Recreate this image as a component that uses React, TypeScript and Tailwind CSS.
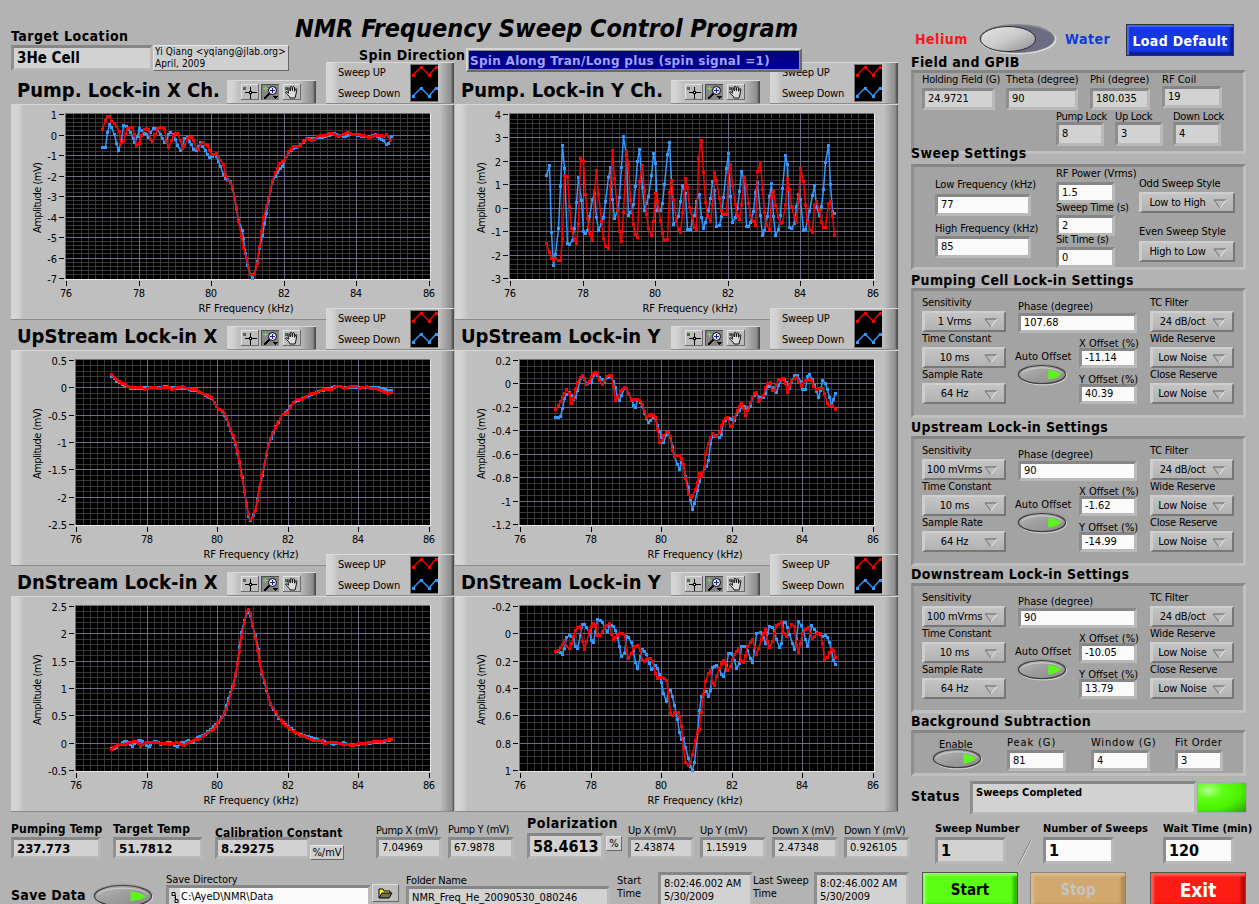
import React from 'react';

type Point = [number, number];

// Traces are stored at three units per pixel, relative to an origin given per chart
const parse = (s: string): Point[] => s.trim().split(/\s+/).map((p) => p.split(',').map(Number) as Point);

// Frequency step of one sample
const STEP = 7.25;

const resample = (points: Point[]): Point[] => {
  const out: Point[] = [points[0]];
  for (let i = 1; i < points.length; i++) {
    const [x0, y0] = points[i - 1];
    const [x1, y1] = points[i];
    const n = Math.max(1, Math.round((x1 - x0) / STEP));
    for (let k = 1; k <= n; k++) {
      out.push([x0 + ((x1 - x0) * k) / n, y0 + ((y1 - y0) * k) / n]);
    }
  }
  return out;
};

const PUMP_X_UP =
  '308,388 316,362 322,350 328,350 335,364 343,370 350,378 357,395 362,433 370,425 376,403 383,386 390,383 397,382 403,402 410,436 418,430 425,406 432,388 438,385 445,388 452,418 458,424 466,402 473,386 480,382 487,382 493,386 500,424 506,442 513,422 520,406 527,400 533,401 540,420 547,446 554,436 562,414 568,412 575,412 581,422 588,446 595,449 602,434 608,427 615,432 622,437 629,452 635,464 642,463 650,461 656,470 662,480 670,494 676,526 684,540 690,546 697,562 703,592 709,622 716,664 724,708 731,742 738,776 744,802 751,823 757,824 764,820 772,790 778,740 784,694 791,652 799,620 805,596 811,572 818,541 826,518 833,504 839,490 847,485 853,482 860,468 866,454 873,449 881,440 888,440 895,438 902,436 909,424 918,414 927,418 935,420 943,418 951,409 960,406 975,406 988,400 1003,402 1015,410 1030,404 1043,397 1057,404 1073,402 1085,405 1098,410 1111,413 1125,406 1140,407 1151,408 1160,402 1165,410 1172,420';
const PUMP_X_DOWN =
  '308,442 316,442 322,396 328,372 335,382 343,403 350,430 356,452 363,420 370,376 378,380 385,388 392,398 399,414 404,426 411,410 418,385 425,390 432,400 438,404 446,412 452,398 459,386 466,386 473,388 480,404 487,415 494,426 500,420 506,404 512,396 520,402 527,418 533,436 540,450 547,442 554,414 562,412 568,424 575,434 581,447 588,452 595,440 602,428 608,440 615,452 622,464 629,472 636,468 643,462 650,470 656,484 662,500 670,524 676,536 690,543 697,566 703,592 709,625 716,660 726,692 731,715 736,760 742,795 750,822 757,835 764,820 772,785 779,745 786,705 793,670 800,640 806,600 812,572 818,543 826,528 833,518 840,505 848,498 853,480 866,456 881,445 895,438 909,426 920,416 943,414 975,410 1003,400 1030,410 1057,402 1085,408 1111,411 1125,404 1138,415 1151,422 1160,433 1166,430 1173,410';
const PUMP_Y_UP =
  '290,730 298,758 304,776 310,782 316,776 325,782 332,780 337,716 344,527 352,530 359,620 364,686 373,718 380,730 386,670 392,475 400,485 407,584 412,655 418,700 427,721 433,575 439,511 446,583 454,664 460,716 467,740 475,745 481,560 488,451 494,536 502,632 508,694 514,724 521,636 530,454 536,494 542,602 550,673 556,703 562,712 569,545 577,496 583,572 590,643 596,685 604,707 610,664 617,580 623,605 631,660 638,700 644,721 652,718 659,578 665,542 671,598 680,660 685,688 692,697 698,636 707,535 712,562 719,622 727,655 733,683 739,688 746,475 754,421 760,517 767,607 773,646 781,664 788,614 794,517 800,541 808,596 814,632 820,643 829,643 835,517 842,494 848,557 856,614 862,646 868,658 874,614 883,532 889,560 895,610 902,646 910,664 916,676 922,514 932,488 938,568 943,637 950,676 958,688 964,593 970,574 976,616 985,652 992,670 998,668 1006,614 1012,536 1019,568 1025,620 1034,652 1040,668 1046,604 1052,506 1060,545 1067,616 1073,664 1080,691 1087,697 1094,616 1100,604 1108,632 1115,668 1121,683 1127,682 1135,610 1142,604 1148,646 1154,706';
const PUMP_Y_DOWN =
  '290,526 298,496 304,698 310,797 316,764 325,685 331,560 337,436 343,506 352,730 358,734 366,720 373,684 379,607 386,533 393,600 400,694 406,700 412,690 419,650 428,598 433,580 439,652 446,690 454,670 461,652 466,604 475,532 481,503 488,598 493,655 502,632 508,593 514,502 521,410 528,465 536,646 542,638 550,614 556,560 562,484 568,448 577,562 584,632 596,590 604,526 610,461 617,490 623,632 631,632 638,610 643,553 652,464 658,427 664,545 671,673 680,660 686,650 692,604 698,557 707,580 712,688 720,688 726,660 733,646 740,604 747,584 754,652 761,684 767,666 775,630 781,596 787,545 793,572 800,679 808,676 815,650 820,593 830,506 835,461 841,590 848,666 856,652 863,626 868,574 874,514 882,545 890,679 895,679 902,666 910,634 916,578 922,548 932,646 938,706 944,690 952,650 958,590 964,550 970,650 977,706 985,688 992,646 998,565 1006,466 1012,494 1019,682 1025,685 1034,670 1040,620 1046,584 1052,598 1061,690 1067,688 1078,634 1088,587 1094,557 1100,622 1108,646 1115,620 1120,568 1127,488 1135,436 1142,553 1148,634 1154,640';
const UP_X_UP =
  '334,194 343,203 350,209 357,215 364,219 376,224 383,230 397,232 425,233 433,238 442,234 460,232 480,235 493,231 508,231 515,238 530,233 547,229 562,235 575,237 588,239 600,247 615,254 635,262 643,277 650,288 658,297 666,300 673,309 680,323 686,340 692,358 701,376 707,398 713,425 719,455 725,496 734,541 740,583 746,614 752,628 758,623 767,602 773,571 779,536 785,496 794,464 800,430 806,407 812,386 818,370 827,353 833,339 840,325 848,313 862,306 870,292 880,278 890,268 908,267 920,258 935,250 953,248 970,237 995,237 1010,230 1022,230 1034,236 1052,229 1068,229 1078,235 1098,229 1112,235 1130,236 1150,245 1162,250 1175,247';
const UP_X_DOWN =
  '334,200 350,213 366,222 390,235 425,234 442,232 480,232 500,230 530,235 560,236 575,241 590,242 615,256 635,264 650,290 666,304 680,326 692,362 707,402 719,458 734,545 746,618 752,630 767,600 779,533 794,462 806,404 827,350 848,314 862,302 880,276 908,266 935,253 970,240 1010,229 1034,233 1060,231 1098,232 1130,232 1150,236 1162,242 1175,241';
const UP_Y_UP =
  '316,298 325,287 332,274 338,262 344,250 350,239 358,250 365,280 371,265 377,239 383,217 391,203 398,196 404,205 410,222 417,214 424,200 430,190 437,187 443,190 449,212 458,223 464,210 470,200 477,196 483,197 491,230 497,271 503,262 510,245 517,238 524,233 530,234 536,250 543,268 563,268 569,272 576,282 583,304 590,323 597,315 603,313 609,316 617,322 623,358 629,397 636,392 641,377 650,368 656,368 662,378 668,421 674,439 687,436 693,446 700,464 707,505 716,553 723,562 728,556 735,538 743,517 749,490 755,498 762,472 767,433 776,400 782,382 788,370 799,380 808,368 814,346 821,334 827,325 833,322 841,350 848,350 854,322 862,300 868,290 875,281 881,294 887,317 893,300 901,278 908,262 914,250 920,247 926,274 932,268 940,256 946,233 953,219 960,218 967,240 973,240 979,222 986,209 1000,206 1006,220 1013,247 1019,230 1025,212 1034,204 1040,202 1046,214 1053,228 1058,220 1067,212 1077,208 1085,212 1091,228 1100,238 1109,236 1117,236 1124,250 1132,280 1139,289 1148,285 1156,298';
const UP_Y_DOWN =
  '316,322 325,322 332,320 338,295 344,266 350,252 358,248 365,256 371,268 377,262 383,240 391,205 398,200 404,208 411,220 417,218 424,216 430,196 437,190 443,197 449,202 456,208 464,215 472,202 482,200 490,215 497,232 503,262 508,272 515,256 524,234 530,236 536,250 543,268 551,286 557,292 563,270 570,278 576,290 583,310 590,325 596,338 602,330 609,323 617,325 623,345 629,365 635,382 641,397 650,372 656,370 662,382 668,408 674,440 681,463 688,478 695,458 700,464 707,498 716,533 721,570 727,598 734,580 742,541 749,514 755,495 762,475 768,468 775,451 781,400 788,380 800,376 808,382 815,373 821,335 833,325 845,327 852,332 860,312 867,300 875,293 882,290 890,294 901,290 908,263 920,250 928,262 940,262 946,250 953,230 960,228 972,235 979,248 986,225 995,208 1003,208 1010,218 1018,235 1025,215 1034,197 1042,197 1050,215 1058,238 1066,238 1073,198 1079,193 1086,208 1093,225 1105,262 1112,240 1118,211 1125,220 1132,237 1139,262 1144,282 1150,268 1157,250';
const DN_X_UP =
  '334,1318 345,1309 358,1302 376,1304 390,1297 408,1294 421,1308 440,1296 458,1298 480,1299 508,1302 530,1298 553,1305 566,1297 580,1290 600,1286 620,1270 640,1258 653,1238 668,1218 680,1198 686,1180 692,1153 701,1127 707,1093 713,1059 719,1024 725,982 734,938 740,903 746,899 752,911 758,943 767,985 773,1022 779,1054 785,1085 794,1112 800,1136 806,1162 812,1180 818,1192 827,1203 836,1220 850,1240 865,1252 880,1264 900,1275 920,1282 940,1290 960,1291 975,1300 1000,1296 1030,1302 1060,1306 1075,1300 1100,1300 1120,1295 1145,1294 1160,1290 1175,1289';
const DN_X_DOWN =
  '334,1316 350,1312 366,1296 378,1294 397,1308 408,1294 420,1290 432,1300 447,1310 458,1296 470,1294 482,1302 510,1296 531,1310 545,1298 566,1292 580,1297 592,1282 615,1272 640,1250 655,1236 672,1210 685,1165 698,1130 712,1060 718,1010 725,968 734,932 742,906 750,915 766,975 774,1018 785,1090 800,1142 812,1184 836,1226 865,1248 890,1270 920,1278 960,1290 1000,1302 1030,1298 1050,1306 1090,1300 1130,1298 1175,1289';
const DN_Y_UP =
  '316,304 325,302 332,293 338,284 344,270 350,290 358,295 364,280 370,260 377,241 383,232 391,228 397,275 404,298 410,275 417,245 424,228 431,219 437,225 443,256 449,256 457,243 464,232 470,226 477,220 483,254 491,269 497,262 503,255 509,250 524,253 530,300 536,324 543,310 551,296 557,288 563,286 570,300 576,330 583,334 590,327 602,325 608,335 615,370 623,385 635,382 649,391 656,427 662,490 668,496 674,488 684,488 688,500 694,530 700,595 707,637 716,646 722,638 728,613 735,572 742,548 749,538 755,487 761,434 767,394 776,370 782,362 788,400 794,407 800,380 808,355 815,340 821,332 827,340 833,360 841,350 848,328 854,313 865,295 873,335 880,338 886,315 893,290 900,278 908,269 914,290 920,313 926,295 933,268 940,250 947,237 953,275 959,292 967,275 973,250 980,227 993,218 1000,250 1008,260 1016,240 1025,223 1033,228 1040,285 1046,307 1052,280 1058,250 1067,238 1074,232 1080,250 1087,266 1094,260 1103,249 1112,250 1117,280 1124,328 1132,322 1139,308 1145,298 1151,302 1157,323';
const DN_Y_DOWN =
  '316,304 331,307 338,314 344,296 350,262 358,256 365,258 371,265 377,289 383,296 391,255 397,224 404,224 410,232 417,248 424,270 431,278 437,245 443,208 450,210 458,217 464,232 472,243 478,228 484,226 490,230 497,240 503,262 508,288 515,320 522,310 530,258 536,262 543,277 550,300 557,338 563,356 570,320 576,298 583,304 590,314 597,340 603,358 609,355 616,346 623,355 629,373 635,398 641,430 650,453 656,428 662,420 668,440 674,465 682,508 688,548 694,568 701,564 707,592 716,625 722,650 728,662 734,636 742,550 749,480 755,440 762,425 769,425 776,440 782,420 788,352 800,346 808,358 815,374 821,380 829,345 835,311 847,312 854,330 860,356 867,340 873,290 885,288 893,300 900,325 908,338 914,300 920,250 930,246 940,262 947,281 953,250 959,229 968,232 974,242 980,268 987,293 993,280 999,218 1006,217 1012,232 1019,254 1026,280 1033,298 1040,265 1046,214 1053,225 1060,245 1066,268 1073,290 1080,250 1085,226 1092,238 1100,248 1110,252 1117,258 1125,255 1132,262 1139,278 1145,300 1151,330 1157,344';

interface ChartData {
  title: string;
  left: number;
  yTicks: string[];
  minor: number;
  origin: Point;
  up: string;
  down: string;
}

const charts: ChartData[] = [
  { title: 'Pump. Lock-in X Ch.', left: 55, yTicks: ['1', '0', '-1', '-2', '-3', '-4', '-5', '-6', '-7'], minor: 5, origin: [33, 312], up: PUMP_X_UP, down: PUMP_X_DOWN },
  { title: 'Pump. Lock-in Y Ch.', left: 55, yTicks: ['4', '3', '2', '1', '0', '-1', '-2', '-3'], minor: 5, origin: [15, 312], up: PUMP_Y_UP, down: PUMP_Y_DOWN },
  { title: 'UpStream Lock-in X', left: 65, yTicks: ['0.5', '0', '-0.5', '-1', '-1.5', '-2', '-2.5'], minor: 5, origin: [33, 120], up: UP_X_UP, down: UP_X_DOWN },
  { title: 'UpStream Lock-in Y', left: 65, yTicks: ['0.2', '0', '-0.2', '-0.4', '-0.6', '-0.8', '-1', '-1.2'], minor: 4, origin: [15, 120], up: UP_Y_UP, down: UP_Y_DOWN },
  { title: 'DnStream Lock-in X', left: 65, yTicks: ['2.5', '2', '1.5', '1', '0.5', '0', '-0.5'], minor: 5, origin: [33, 858], up: DN_X_UP, down: DN_X_DOWN },
  { title: 'DnStream Lock-in Y', left: 65, yTicks: ['-0.2', '0', '0.2', '0.4', '0.6', '0.8', '1'], minor: 4, origin: [15, 138], up: DN_Y_UP, down: DN_Y_DOWN },
];

const X_TICKS = ['76', '78', '80', '82', '84', '86'];
const PLOT_RIGHT = 418;
const PLOT_TOP = 10;
const PLOT_BOTTOM = 174;

const Trace: React.FC<{ data: string; origin: Point; color: string }> = ({ data, origin, color }) => {
  const pts = resample(parse(data)).map(([x, y]) => [Math.round((x - origin[0]) / 3 - 0.5), Math.round((y - origin[1]) / 3 - 0.5)]);
  return (
    <g>
      <polyline points={pts.map(([x, y]) => `${x + 0.5},${y + 0.5}`).join(' ')} fill="none" stroke={color} strokeWidth={1.5} />
      {pts.map(([x, y], i) => (
        <rect key={i} x={x - 1} y={y - 1} width={3} height={3} fill={color} shapeRendering="crispEdges" />
      ))}
    </g>
  );
};

const Graph: React.FC<{ chart: ChartData }> = ({ chart }) => {
  const { left, yTicks, minor, origin } = chart;
  const w = PLOT_RIGHT - left;
  const h = PLOT_BOTTOM - PLOT_TOP;
  const xPos = (i: number, n: number) => Math.round(left + (w * i) / n);
  const yPos = (i: number, n: number) => Math.round(PLOT_TOP + (h * i) / n);
  const rows = yTicks.length - 1;
  const center = (left + PLOT_RIGHT) / 2;

  return (
    <svg width={443} height={214} className="-mt-px block" fontSize={11}>
      <g shapeRendering="crispEdges">
        <rect x={left - 1} y={9} width={w + 3} height={167} fill="#e6e6e6" />
        <rect x={left - 1} y={9} width={w + 2} height={166} fill="#6e6e6e" />
        <rect x={left} y={PLOT_TOP} width={w + 1} height={h + 1} fill="#000" />
        {Array.from({ length: 49 }, (_, i) => (
          <rect key={i} x={xPos(i + 1, 50)} y={PLOT_TOP} width={1} height={h + 1} fill="#383838" />
        ))}
        {Array.from({ length: rows * minor - 1 }, (_, i) => (
          <rect key={i} x={left} y={yPos(i + 1, rows * minor)} width={w + 1} height={1} fill="#383838" />
        ))}
        {X_TICKS.slice(1, -1).map((t, i) => (
          <rect key={t} x={xPos(i + 1, 5)} y={PLOT_TOP} width={1} height={h + 1} fill="#6c6c88" />
        ))}
        {yTicks.slice(1, -1).map((t, i) => (
          <rect key={t} x={left} y={yPos(i + 1, rows)} width={w + 1} height={1} fill="#6c6c88" />
        ))}
        {X_TICKS.map((t, i) => (
          <rect key={t} x={xPos(i, 5)} y={177} width={1} height={5} fill="#000" />
        ))}
        {yTicks.map((t, i) => (
          <rect key={t} x={left - 7} y={yPos(i, rows)} width={5} height={1} fill="#000" />
        ))}
      </g>
      {X_TICKS.map((t, i) => (
        <text key={t} x={xPos(i, 5)} y={193} textAnchor="middle" textLength={12}>
          {t}
        </text>
      ))}
      {yTicks.map((t, i) => (
        <text key={t} x={left - 9} y={yPos(i, rows) + 5} textAnchor="end" letterSpacing={-0.1}>
          {t}
        </text>
      ))}
      <text x={center - 49} y={208} textLength={95}>
        RF Frequency (kHz)
      </text>
      <text transform="translate(30 129) rotate(-90)" textLength={71}>
        Amplitude (mV)
      </text>
      <Trace data={chart.down} origin={origin} color="#3399ff" />
      <Trace data={chart.up} origin={origin} color="#ff0000" />
    </svg>
  );
};

const Palette: React.FC = () => (
  <div className="mt-[18px] flex h-6 w-[89px] border-t border-b border-t-[#dadada] border-b-[#8a8a8a] bg-[linear-gradient(90deg,#d6d6d6_0,#d2d2d2_6px,#bfbfbf_12px,#bfbfbf_72px,#8c8c8c_86px,#4c4c4c_88px)] pt-[3px] pl-[14px]">
    <svg width={62} height={17} shapeRendering="crispEdges">
      <rect x={0} y={0} width={18} height={16} fill="#6a6a6a" />
      <rect x={0} y={0} width={17} height={15} fill="#e2e2e2" />
      <rect x={1} y={1} width={16} height={14} fill="#bdbdbd" />
      <rect x={2} y={3} width={3} height={3} fill="#46703c" />
      <path d="M9.5 3v12M4 8.5h12" stroke="#000" />
      <rect x={8} y={7} width={3} height={3} fill="#000" />
      <rect x={9} y={8} width={1} height={1} fill="#fff" />

      <rect x={20} y={0} width={18} height={16} fill="#4f4f4f" />
      <rect x={21} y={1} width={17} height={15} fill="#858585" />
      <path d="M22 4.5h5M24.500 2v5" stroke="#5cf02c" strokeWidth={1} />
      <path d="M28 10l-5 5" stroke="#000" strokeWidth={2} />
      <circle cx={31.5} cy={6.5} r={4} fill="#e4e4fa" stroke="#000" shapeRendering="auto" />
      <path d="M29 6.500h5M31.500 4v5" stroke="#1c1c8c" />
      <path d="M31 12h6l-3 3z" fill="#000" />

      <rect x={42} y={0} width={18} height={16} fill="#6a6a6a" />
      <rect x={42} y={0} width={17} height={15} fill="#e2e2e2" />
      <rect x={43} y={1} width={16} height={14} fill="#bdbdbd" />
      <rect x={44} y={3} width={3} height={3} fill="#46703c" />
      <path
        d="M49 14c0-2-4-4-4.500-6 .8-.9 2 .4 3 1.300L47 4.500c.2-1 1.500-.8 1.700 0l.6 2.500-.1-4c.3-1 1.500-.9 1.800 0l.4 3.700.4-3.500c.4-.8 1.400-.7 1.700.2l.1 3.900.8-2.300c.5-.7 1.400-.5 1.500.3L55 10l-1 4z"
        fill="#dcdcdc"
        stroke="#000"
        strokeWidth={0.9}
        shapeRendering="auto"
      />
    </svg>
  </div>
);

const Legend: React.FC = () => (
  <div className="ml-[10px] flex h-[42px] w-[117px] grow border-t border-b border-t-[#dadada] border-b-[#8a8a8a] bg-[linear-gradient(90deg,#d6d6d6_0,#d2d2d2_6px,#bfbfbf_12px,#bfbfbf_113px,#8c8c8c_125px,#4c4c4c_127px)] pl-3">
    <div className="w-[72px] pt-[3px] text-[11px] leading-[14px] tracking-[-0.2px] whitespace-nowrap">
      <div className="mb-[7px]">Sweep UP</div>
      <div>Sweep Down</div>
    </div>
    <svg width={28} height={38} className="mt-px" shapeRendering="crispEdges">
      <rect width={28} height={37} fill="#000" stroke="#777" />
      <g fill="none" shapeRendering="auto" strokeWidth={1.3}>
        <path d="M3 11l8-8 8 8 7-8" stroke="#f00" />
        <path d="M3 32l8-8 8 8 7-8" stroke="#39f" />
      </g>
      {[[3, 11], [11, 3], [19, 11], [26, 3]].map(([x, y]) => (
        <g key={x}>
          <rect x={x - 1} y={y - 1} width={3} height={3} fill="#f00" />
          <rect x={x - 1} y={y + 20} width={3} height={3} fill="#39f" />
        </g>
      ))}
    </svg>
  </div>
);

const ChartPanel: React.FC<{ chart: ChartData }> = ({ chart }) => (
  <div className="h-[246px] w-[443px]">
    <div className="relative flex h-[42px] items-start">
      <h2 className="mt-4 w-[216px] pl-[6px] text-[20px] leading-6 font-bold whitespace-nowrap">{chart.title}</h2>
      <Palette />
      <Legend />
    </div>
    <div className="h-[216px] border-t border-b border-t-[#d8d8d8] border-b-[#8a8a8a] bg-[linear-gradient(90deg,#d6d6d6_0,#d2d2d2_7px,#bfbfbf_13px,#bfbfbf_429px,#8c8c8c_441px,#4c4c4c_443px)]">
      <Graph chart={chart} />
    </div>
  </div>
);

const Label: React.FC<{ className?: string; children: React.ReactNode }> = ({ className = 'h-4 tracking-[-0.2px]', children }) => (
  <div className={`text-[11px] leading-4 whitespace-nowrap ${className}`}>{children}</div>
);

const Box: React.FC<{ className: string; input?: boolean; children?: React.ReactNode }> = ({ className, input, children }) => (
  <div
    className={`flex shrink-0 overflow-hidden border-[3px] border-t-[#868686] border-r-[#b9b9b9] border-b-[#b9b9b9] border-l-[#8e8e8e] pt-px pl-[3px] whitespace-nowrap ${input ? 'bg-[#fafafa]' : 'bg-[#d2d2d2]'} ${className}`}
  >
    {children}
  </div>
);

const Field: React.FC<{ label: string; value: string; box: string; className?: string; labelClass?: string; input?: boolean }> = ({
  label,
  value,
  box,
  className = '',
  labelClass,
  input,
}) => (
  <div className={className}>
    <Label className={labelClass}>{label}</Label>
    <Box className={`items-center text-[11px] ${box}`} input={input}>
      {value}
    </Box>
  </div>
);

const Dropdown: React.FC<{ label: string; value: string; width?: string; labelClass?: string; className?: string }> = ({
  label,
  value,
  width = 'w-[84px]',
  labelClass,
  className = '',
}) => (
  <div className={className}>
    <Label className={labelClass}>{label}</Label>
    <div
      className={`flex h-[21px] items-center border-t-2 border-r-2 border-b-2 border-l-[3px] border-t-[#cfcfcf] border-r-[#777] border-b-[#777] border-l-[#cdcdcd] bg-[linear-gradient(#c4c4c4,#b2b2b2)] ${width}`}
    >
      <span className="grow text-center text-[11px] leading-[14px] tracking-[-0.2px] whitespace-nowrap">{value}</span>
      <svg width={14} height={10} className="mt-[2px] mr-[6px] shrink-0">
        <path d="M1 1h12" stroke="#606060" fill="none" />
        <path d="M1 1l6 8" stroke="#707070" fill="none" />
        <path d="M7 9l6-8" stroke="#e8e8e8" fill="none" />
      </svg>
    </div>
  </div>
);

const LedButton: React.FC<{ id: string; width: number; height: number; className?: string }> = ({ id, width, height, className = '' }) => (
  <svg width={width + 6} height={height + 6} viewBox={`-3 -3 ${width + 6} ${height + 6}`} className={`shrink-0 ${className}`}>
    <defs>
      <linearGradient id={id} x1="0" y1="0" x2="1" y2="1">
        <stop offset="0" stopColor="#b8b8b8" />
        <stop offset="0.5" stopColor="#9c9c9c" />
        <stop offset="1" stopColor="#8c8c8c" />
      </linearGradient>
    </defs>
    <ellipse cx={width / 2} cy={height / 2} rx={width / 2 + 1.5} ry={height / 2 + 1.5} fill="#8e8e8e" opacity={0.5} />
    <ellipse cx={width / 2 + 0.8} cy={height / 2 + 1} rx={width / 2} ry={height / 2} fill="none" stroke="#d8d8d8" />
    <ellipse cx={width / 2} cy={height / 2} rx={width / 2 - 0.5} ry={height / 2 - 0.5} fill={`url(#${id})`} stroke="#3c3c3c" strokeWidth={1.2} />
    <path d={`M4 ${height / 2 - 1}C9 1 ${width - 9} 1 ${width - 4} ${height / 2 - 1}`} stroke="#d0d0d0" fill="none" />
    <path d={`M${width * 0.63} ${height / 2 - 5}c5 1 9 2 ${width * 0.27} 5c-3 3-8 4.500-${width * 0.27} 5z`} fill="#5cf51c" />
  </svg>
);

const Section: React.FC<{ title: string; titleClass: string; className: string; children: React.ReactNode }> = ({
  title,
  titleClass,
  className,
  children,
}) => (
  <>
    <h3 className={`relative text-[14px] leading-4 font-bold tracking-[0.35px] whitespace-nowrap ${titleClass}`}>{title}</h3>
    <section
      className={`w-[335px] border-[3px] border-t-[#868686] border-r-[#bfbfbf] border-b-[#bfbfbf] border-l-[#8e8e8e] bg-[#a3a3a3] ${className}`}
    >
      {children}
    </section>
  </>
);

interface LockIn {
  id: string;
  title: string;
  titleClass: string;
  sensitivity: string;
  phase: string;
  xOffset: string;
  yOffset: string;
}

const lockIns: LockIn[] = [
  { id: 'pump', title: 'Pumping Cell Lock-in Settings', titleClass: 'mt-[2px] h-4', sensitivity: '1 Vrms', phase: '107.68', xOffset: '-11.14', yOffset: '40.39' },
  { id: 'up', title: 'Upstream Lock-in Settings', titleClass: 'mt-px h-[17px]', sensitivity: '100 mVrms', phase: '90', xOffset: '-1.62', yOffset: '-14.99' },
  { id: 'down', title: 'Downstream Lock-in Settings', titleClass: 'h-[17px]', sensitivity: '100 mVrms', phase: '90', xOffset: '-10.05', yOffset: '13.79' },
];

const LockInSection: React.FC<{ lockIn: LockIn }> = ({ lockIn }) => (
  <Section title={lockIn.title} titleClass={lockIn.titleClass} className="flex h-[130px] pt-1 pl-2">
    <div className="w-[93px]">
      <Dropdown label="Sensitivity" value={lockIn.sensitivity} />
      <Dropdown label="Time Constant" value="10 ms" className="-mt-px" />
      <Dropdown label="Sample Rate" value="64 Hz" className="-mt-px" />
    </div>
    <div className="w-[135px] pt-1">
      <Field label="Phase (degree)" value={lockIn.phase} box="h-5 w-[119px]" className="pl-[3px]" labelClass="h-[14px]" input />
      <div className="flex pt-[3px]">
        <div className="w-16 pt-[13px]">
          <Label className="h-[13px] tracking-[0.05px]">Auto Offset</Label>
          <LedButton id={`auto-${lockIn.id}`} width={48} height={19} />
        </div>
        <div>
          <Field label="X Offset (%)" value={lockIn.xOffset} box="h-5 w-[58px]" labelClass="h-3" input />
          <Field label="Y Offset (%)" value={lockIn.yOffset} box="h-5 w-[58px]" className="mt-1" labelClass="h-3" input />
        </div>
      </div>
    </div>
    <div>
      <Dropdown label="TC Filter" value="24 dB/oct" />
      <Dropdown label="Wide Reserve" value="Low Noise" className="-mt-px" />
      <Dropdown label="Close Reserve" value="Low Noise" className="-mt-px" />
    </div>
  </Section>
);

const Header: React.FC = () => (
  <header className="relative z-10 flex h-[62px] items-start">
    <div className="w-[284px] shrink-0 pt-[28px]">
      <div className="h-[17px] text-[14px] leading-4 font-bold tracking-[0.5px]">Target Location</div>
      <div className="flex">
        <Box className="h-[26px] w-[142px] items-center text-[15px] font-bold">3He Cell</Box>
        <div className="h-[26px] w-[136px] border border-t-[#e4e4e4] border-r-[#666] border-b-[#666] border-l-[#e4e4e4] bg-[#cfcfcf] pl-px text-[10px] leading-3 tracking-[0.1px] whitespace-nowrap">
          Yi Qiang &lt;yqiang@jlab.org&gt;
          <br />
          April, 2009
        </div>
      </div>
    </div>
    <div>
      <h1 className="mt-[14px] h-[32px] text-[25px] leading-[30px] font-bold tracking-[-0.05px] whitespace-nowrap italic">
        NMR Frequency Sweep Control Program
      </h1>
      <div className="flex items-start pt-[2px] pl-16">
        <div className="w-[107px] pt-px -mt-[2px] text-[14px] leading-4 font-bold tracking-[0.4px] whitespace-nowrap">Spin Direction</div>
        <div className="flex h-6 w-[336px] items-center border-2 border-t-[#d4d4d4] border-r-[#6a6a6a] border-b-[#6a6a6a] border-l-[#d4d4d4] bg-[#00008b] pt-px pl-[2px] font-['DejaVu_Sans',sans-serif] text-[12px] font-bold tracking-[0.3px] whitespace-nowrap text-[#a3a3ff] outline-1 -outline-offset-3 outline-[#8a8a8a]">
          Spin Along Tran/Long plus (spin signal =1)
        </div>
      </div>
    </div>
  </header>
);

const Unit: React.FC<{ className: string; children: React.ReactNode }> = ({ className, children }) => (
  <div
    className={`flex items-center justify-center border border-t-[#e4e4e4] border-r-[#666] border-b-[#666] border-l-[#e4e4e4] bg-[#cfcfcf] pt-px text-[11px] ${className}`}
  >
    {children}
  </div>
);

const Readouts: React.FC = () => (
  <div className="flex h-[60px] items-start">
    <div className="mt-[10px] w-[102px]">
      <div className="h-[15px] text-[12px] leading-[14px] font-bold tracking-[0.15px] whitespace-nowrap">Pumping Temp</div>
      <Box className="h-[22px] w-[90px] items-center text-[13px] font-bold">237.773</Box>
    </div>
    <div className="mt-[10px] w-[102px]">
      <div className="h-[15px] text-[12px] leading-[14px] font-bold tracking-[0.25px] whitespace-nowrap">Target Temp</div>
      <Box className="h-[22px] w-[90px] items-center text-[13px] font-bold">51.7812</Box>
    </div>
    <div className="mt-[13px] w-[161px]">
      <div className="relative h-3 text-[12px] leading-4 font-bold tracking-[0.1px] whitespace-nowrap">Calibration Constant</div>
      <div className="flex items-start">
        <Box className="h-[22px] w-[95px] items-center text-[13px] font-bold">8.29275</Box>
        <Unit className="mt-2 h-[15px] w-[34px]">%/mV</Unit>
      </div>
    </div>
    <Field label="Pump X (mV)" value="7.04969" className="mt-[11px] w-[72px]" labelClass="h-[14px] tracking-[-0.3px]" box="h-[22px] w-[66px]" />
    <Field label="Pump Y (mV)" value="67.9878" className="mt-[10px] w-[79px]" labelClass="h-[15px] tracking-[-0.3px]" box="h-[22px] w-[66px]" />
    <div className="mt-[3px] w-[101px]">
      <div className="h-[18px] text-[14px] leading-4 font-bold tracking-[0.5px]">Polarization</div>
      <div className="flex items-start gap-[2px]">
        <Box className="h-[26px] w-[77px] items-center text-[16px] font-bold">58.4613</Box>
        <Unit className="mt-[3px] h-[15px] w-4">%</Unit>
      </div>
    </div>
    <Field label="Up X (mV)" value="2.43874" className="mt-[11px] w-[72px]" labelClass="h-[14px] tracking-[-0.3px]" box="h-[22px] w-[66px]" />
    <Field label="Up Y (mV)" value="1.15919" className="mt-[11px] w-[72px]" labelClass="h-[14px] tracking-[-0.3px]" box="h-[22px] w-[66px]" />
    <Field label="Down X (mV)" value="2.47348" className="mt-[11px] w-[72px]" labelClass="h-[14px] tracking-[-0.3px]" box="h-[22px] w-[66px]" />
    <Field label="Down Y (mV)" value="0.926105" className="mt-[11px]" labelClass="h-[14px] tracking-[-0.3px]" box="h-[22px] w-[66px]" />
  </div>
);

const TimeStamp: React.FC = () => (
  <Box className="h-[36px] w-[95px] items-start">
    <div className="pt-px text-[11px] leading-[13px] tracking-[-0.1px]">
      8:02:46.002 AM
      <br />
      5/30/2009
    </div>
  </Box>
);

const SaveBar: React.FC = () => (
  <div className="flex h-8 items-start overflow-hidden">
    <div className="mt-[15px] w-[80px] text-[14px] leading-4 font-bold tracking-[0.3px] whitespace-nowrap">Save Data</div>
    <LedButton id="save" width={58} height={22} className="mt-[10px]" />
    <div className="w-[206px] pl-[11px]">
      <Label className="h-[13px] tracking-[-0.1px]">Save Directory</Label>
      <Box className="h-[24px] w-[205px] items-center text-[11px]" input>
        <svg width={11} height={18} className="-mt-px -ml-[3px] shrink-0">
          <rect width={11} height={18} fill="#d2d2d2" />
          <path d="M3 4.500h3v3h-3zM6.500 7v4M6.500 9.500h-1M6 11.500h3v3h-3z" stroke="#000" fill="none" />
        </svg>
        <span className="pl-px">C:\AyeD\NMR\Data</span>
      </Box>
    </div>
    <div className="mt-3 ml-[11px] flex h-[18px] w-[27px] items-center justify-center border border-t-[#e0e0e0] border-r-[#666] border-b-[#666] border-l-[#e0e0e0] bg-[#bdbdbd]">
      <svg width={15} height={11}>
        <path d="M1 10V1h4l1 2h6v2" fill="#ffee30" stroke="#000" />
        <path d="M1 10l3-5h10l-3 5z" fill="#6e6e50" stroke="#000" />
      </svg>
    </div>
    <div className="ml-[7px] w-[211px] pt-px">
      <Label className="h-[13px] tracking-[-0.2px]">Folder Name</Label>
      <Box className="h-[24px] w-[204px] items-center text-[11px]">NMR_Freq_He_20090530_080246</Box>
    </div>
    <div className="w-[41px] pt-[2px] text-[11px] leading-[13px]">
      Start
      <br />
      Time
    </div>
    <TimeStamp />
    <div className="w-[61px] pt-[2px] text-[11px] leading-[13px] tracking-[-0.1px] whitespace-nowrap">
      Last Sweep
      <br />
      Time
    </div>
    <TimeStamp />
  </div>
);

const SampleSwitch: React.FC = () => (
  <div className="flex h-[54px] items-start pl-1 text-[14px] leading-4 font-bold">
    <span className="mt-[31px] w-[62px] tracking-[0.5px] text-[#ff1414]">Helium</span>
    <svg width={82} height={34} viewBox="0 0 82 34" className="mt-[22px] shrink-0">
      <defs>
        <linearGradient id="knob" x1="0" y1="0" x2="1" y2="1">
          <stop offset="0" stopColor="#e6e6e6" />
          <stop offset="0.5" stopColor="#cacaca" />
          <stop offset="1" stopColor="#8e8e8e" />
        </linearGradient>
      </defs>
      <ellipse cx={41} cy={17.500} rx={38.500} ry={15} fill="#dedede" />
      <ellipse cx={40} cy={16.500} rx={38} ry={14.500} fill="#8a8a8a" />
      <ellipse cx={40.500} cy={17} rx={36.500} ry={13.500} fill="#6c6c84" />
      <ellipse cx={31} cy={17} rx={27.500} ry={12.500} fill="url(#knob)" stroke="#2c2c2c" />
    </svg>
    <span className="mt-[31px] ml-[6px] w-[61px] tracking-[0.5px] text-[#0a3cd8]">Water</span>
    <button className="mt-6 flex h-8 w-[108px] items-center justify-center border border-[#333] bg-[#1638e0] pt-px text-[14px] tracking-[0.35px] whitespace-nowrap text-white shadow-[inset_2px_2px_1px_#4468ff,inset_-3px_-3px_2px_#0a1c98]">
      Load Default
    </button>
  </div>
);

const BigField: React.FC<{ label: string; value: string; className?: string; input?: boolean }> = ({ label, value, className = '', input }) => (
  <div className={className}>
    <div className="h-[15px] text-[11px] leading-[14px] font-bold whitespace-nowrap">{label}</div>
    <Box className="h-[27px] w-[71px] items-center text-[16px] font-bold" input={input}>
      {value}
    </Box>
  </div>
);

const Settings: React.FC = () => (
  <aside className="h-[904px] w-[348px] shrink-0 overflow-hidden">
    <SampleSwitch />
    <Section title="Field and GPIB" titleClass="h-4" className="h-[84px]">
      <div className="-mt-px flex h-[37px] pl-2">
        <Field label="Holding Field (G)" value="24.9721" className="w-[84px]" labelClass="h-4 tracking-[-0.25px]" box="h-[22px] w-[73px]" />
        <Field label="Theta (degree)" value="90" className="w-[84px]" labelClass="h-4 tracking-[-0.1px]" box="h-[22px] w-[72px]" />
        <Field label="Phi (degree)" value="180.035" className="w-[72px]" labelClass="h-4 tracking-[-0.1px]" box="h-[22px] w-[60px]" />
        <Field label="RF Coil" value="19" labelClass="h-[14px]" box="h-[22px] w-[60px]" />
      </div>
      <div className="flex pl-[142px]">
        <Field label="Pump Lock" value="8" className="w-[59px]" labelClass="h-[13px] tracking-[-0.3px]" box="h-6 w-12" />
        <Field label="Up Lock" value="3" className="w-[58px]" labelClass="h-[13px] tracking-[-0.3px]" box="h-6 w-12" />
        <Field label="Down Lock" value="4" labelClass="h-[13px] tracking-[-0.3px]" box="h-6 w-12" />
      </div>
    </Section>
    <Section title="Sweep Settings" titleClass="-mt-[9px] h-[19px]" className="flex h-[106px] pl-[21px]">
      <div className="w-[121px] pt-[10px]">
        <Field label="Low Frequency (kHz)" value="77" labelClass="h-[17px] tracking-[-0.1px]" box="h-[22px] w-24" input />
        <Field label="High Frequency (kHz)" value="85" className="mt-[5px]" labelClass="h-[15px] tracking-[-0.15px]" box="h-[22px] w-24" input />
      </div>
      <div className="-mt-px w-[83px]">
        <Field label="RF Power (Vrms)" value="1.5" labelClass="h-4 tracking-[-0.1px]" box="h-[21px] w-[59px]" input />
        <Field label="Sweep Time (s)" value="2" className="relative -mt-[3px]" labelClass="h-[15px] tracking-[-0.25px]" box="h-[21px] w-[59px]" input />
        <Field label="Sit Time (s)" value="0" className="relative -mt-[4px]" labelClass="h-[15px] tracking-[-0.3px]" box="h-[21px] w-[59px]" input />
      </div>
      <div className="pt-[9px]">
        <Dropdown label="Odd Sweep Style" value="Low to High" width="w-24" />
        <Dropdown label="Even Sweep Style" value="High to Low" width="w-24" className="mt-[11px]" labelClass="h-[17px] tracking-[-0.1px]" />
      </div>
    </Section>
    {lockIns.map((l) => (
      <LockInSection key={l.id} lockIn={l} />
    ))}
    <Section title="Background Subtraction" titleClass="h-[17px]" className="flex h-[46px] pl-4">
      <div className="w-[77px] pt-1">
        <Label className="h-[9px] pl-[9px]">Enable</Label>
        <LedButton id="enable" width={48} height={19} />
      </div>
      <Field label="Peak (G)" value="81" className="w-[84px] pt-[2px]" labelClass="h-[15px] tracking-[0.9px]" box="h-[21px] w-[59px]" input />
      <Field label="Window (G)" value="4" className="w-[84px] pt-[2px]" labelClass="h-[15px] tracking-[0.8px]" box="h-[21px] w-[59px]" input />
      <Field label="Fit Order" value="3" className="pt-[2px]" labelClass="h-[15px] tracking-[0.5px]" box="h-[21px] w-12" input />
    </Section>
    <div className="flex items-start pt-[5px]">
      <div className="mt-[7px] w-[59px] text-[14px] leading-4 font-bold tracking-[0.5px]">Status</div>
      <Box className="h-[34px] w-[227px] items-start text-[11px] leading-4 font-bold">Sweeps Completed</Box>
      <div className="mt-px h-[31px] w-[50px] border border-[#a8a8a8] bg-[radial-gradient(ellipse_at_22%_25%,#b8ff90_0,#5cff14_28%,#4cf000_62%,#2aa000_100%)]" />
    </div>
    <div className="flex h-[57px] items-start pt-[7px] pl-6">
      <BigField label="Sweep Number" value="1" className="w-[82px]" />
      <svg width={16} height={28} className="mt-[17px] mr-[10px]">
        <path d="M1 26L14 1" stroke="#777" />
        <path d="M2 26L15 1" stroke="#d8d8d8" />
      </svg>
      <BigField label="Number of Sweeps" value="1" className="w-[120px]" input />
      <BigField label="Wait Time (min)" value="120" input />
    </div>
    <div className="flex pl-[11px] font-bold">
      <button className="mr-3 h-9 w-24 border border-[#555] bg-[#5cff14] pt-px text-[15px] text-black shadow-[inset_3px_3px_2px_#8cff5c,inset_-4px_-3px_3px_#34b800]">
        Start
      </button>
      <button className="mr-6 h-9 w-24 border border-[#888] bg-[#d2a86e] pt-px text-[15px] text-[#c4c4c4] shadow-[inset_3px_3px_2px_#dcb988,inset_-4px_-3px_3px_#b08a56]">
        Stop
      </button>
      <button className="h-9 w-24 border border-[#555] bg-[#ff1c14] text-[19px] text-white shadow-[inset_3px_3px_2px_#ff5c50,inset_-4px_-3px_3px_#b40c06]">
        Exit
      </button>
    </div>
  </aside>
);

export default function App() {
  return (
    <div className="flex h-[904px] w-[1259px] overflow-hidden bg-[#b3b3b3] font-['DejaVu_Sans_Condensed','DejaVu_Sans',sans-serif] text-black">
      <main className="w-[911px] shrink-0 pl-[11px]">
        <Header />
        <div className="grid h-[750px] grid-cols-[443px_443px] content-start gap-x-px">
          {charts.map((c) => (
            <ChartPanel key={c.title} chart={c} />
          ))}
        </div>
        <Readouts />
        <SaveBar />
      </main>
      <Settings />
    </div>
  );
}
